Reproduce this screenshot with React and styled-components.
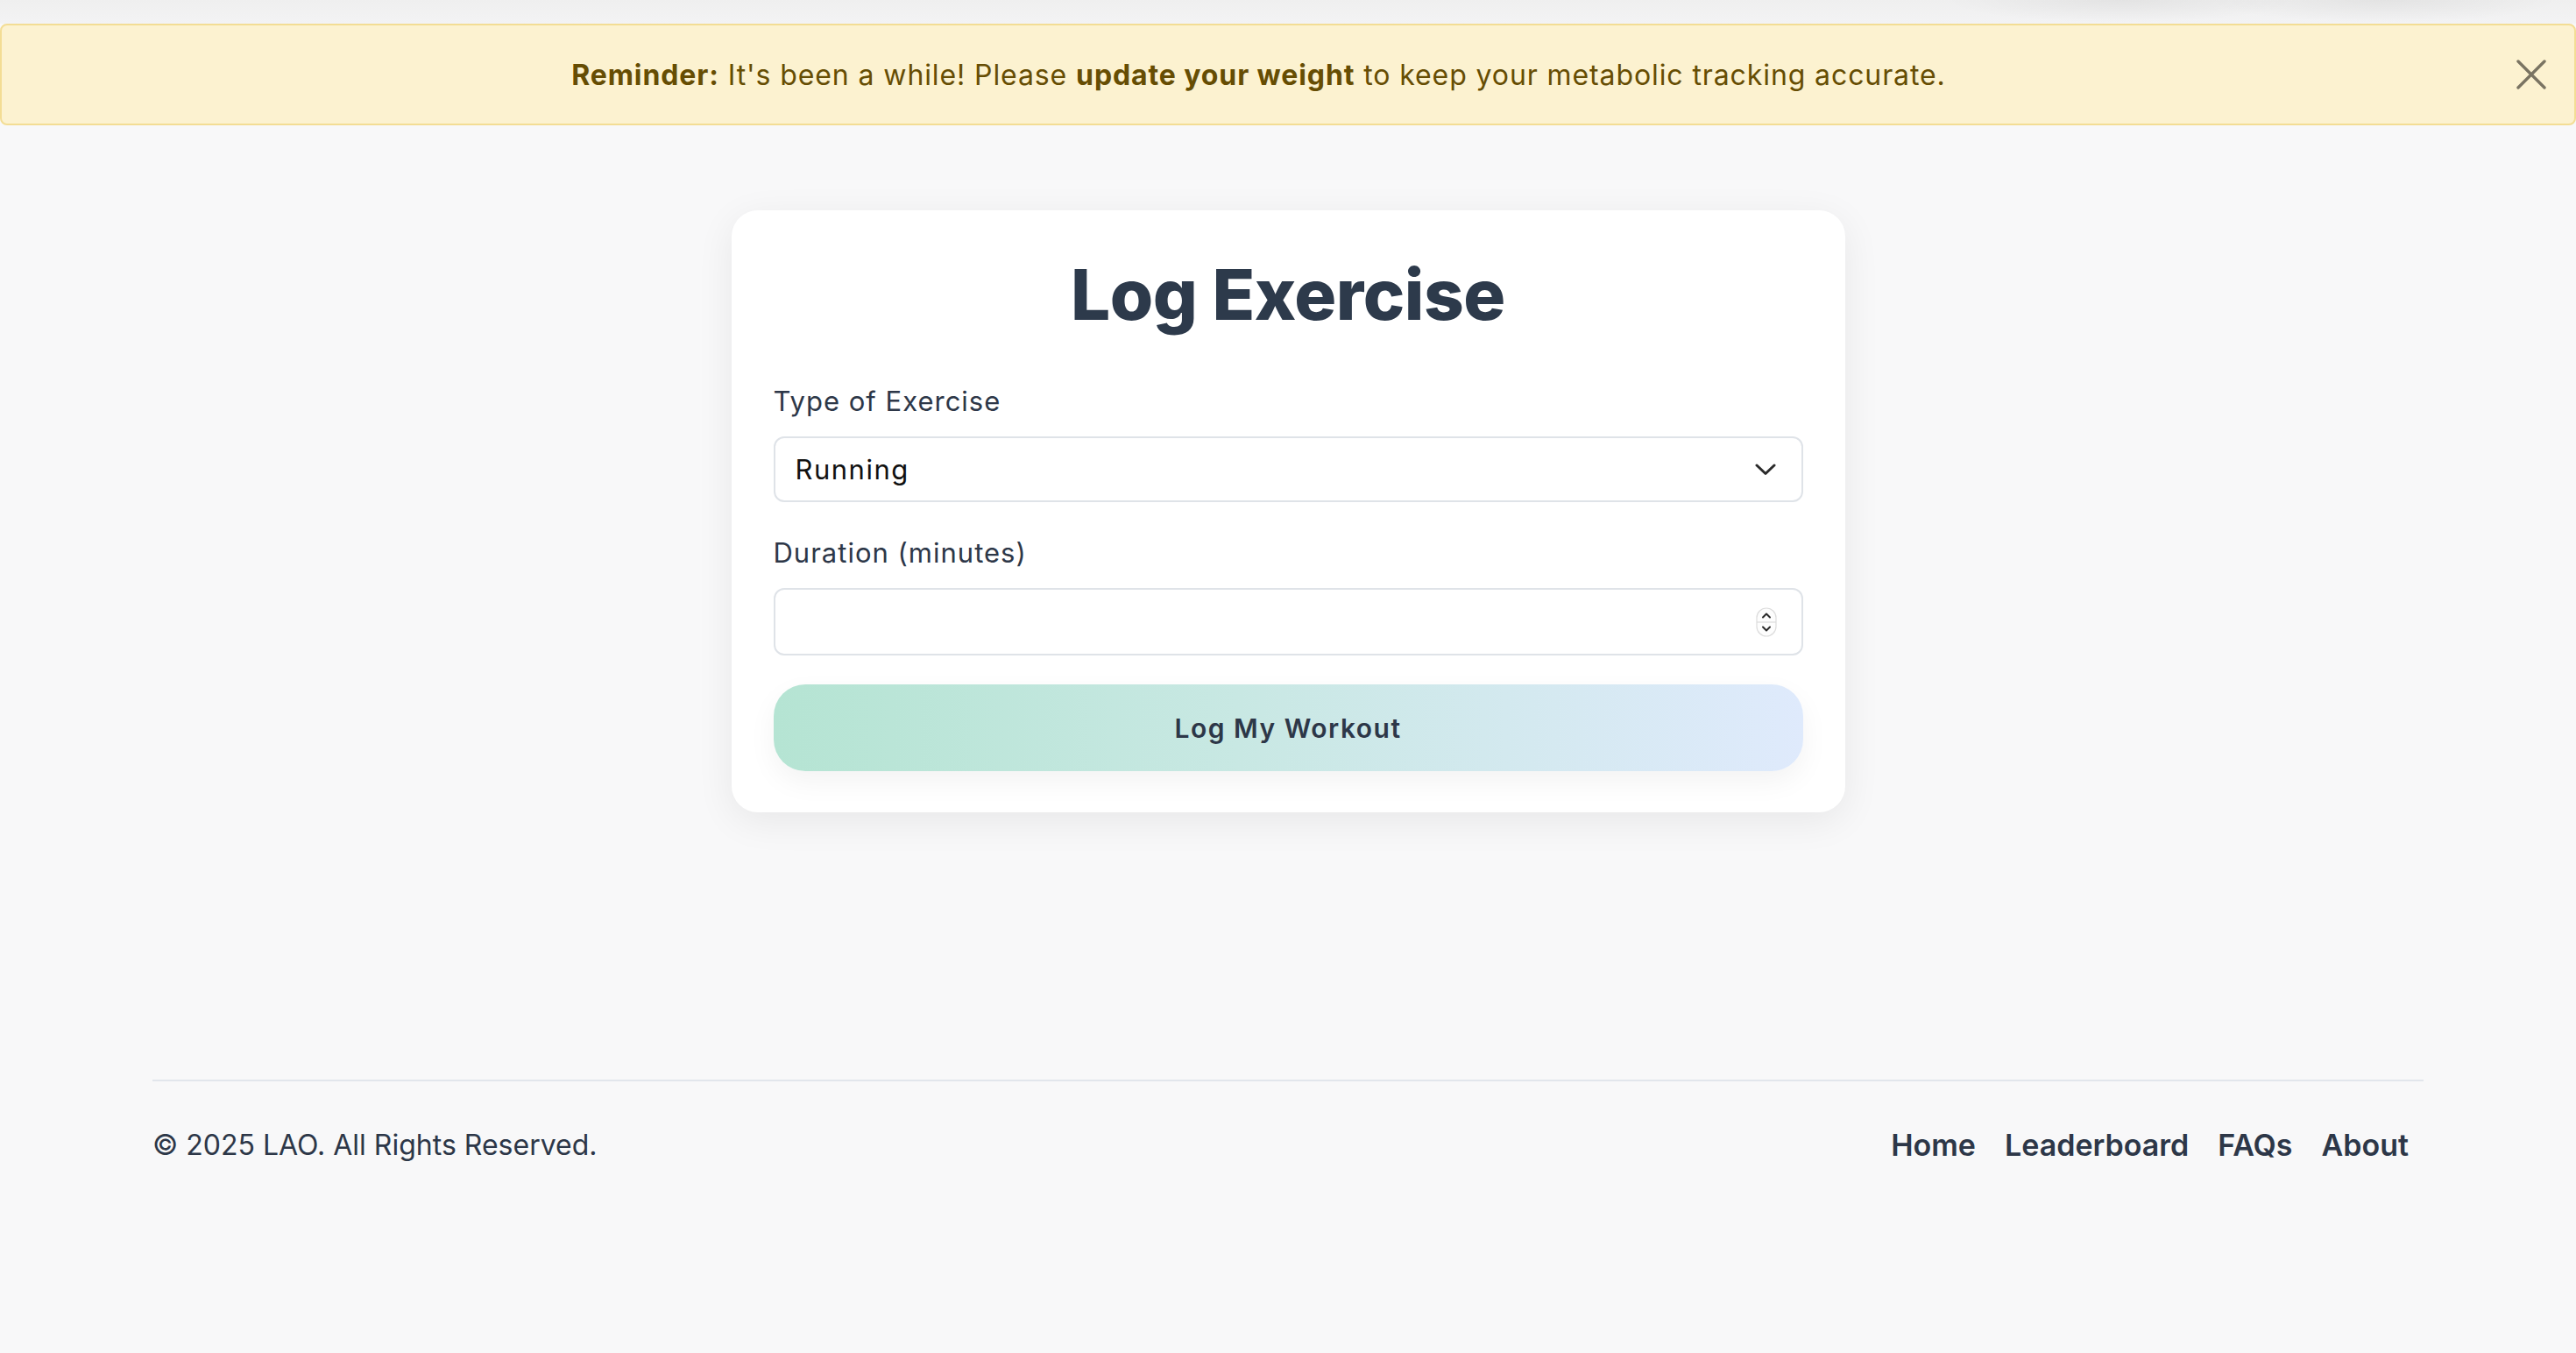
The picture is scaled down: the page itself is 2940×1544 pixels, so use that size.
import React, { useState } from "react";
import styled, { createGlobalStyle } from "styled-components";

const TextColor = "#2d3748";
const FontStack = `"Inter", "Liberation Sans", sans-serif`;

const GlobalStyle = createGlobalStyle`
  * {
    box-sizing: border-box;
  }
  html, body {
    margin: 0;
    padding: 0;
    background: #f8f8f9;
    font-family: ${FontStack};
    color: ${TextColor};
  }
`;

function App() {
  const [showReminder, setShowReminder] = useState(true);
  const [exercise, setExercise] = useState("Running");
  const [duration, setDuration] = useState("");

  return (
    <Page>
      <GlobalStyle />
      <TopShade />
      {showReminder && (
        <Reminder>
          <ReminderText>
            <strong>Reminder:</strong> It's been a while! Please{" "}
            <strong>update your weight</strong> to keep your metabolic tracking
            accurate.
          </ReminderText>
          <CloseButton onClick={() => setShowReminder(false)} aria-label="Close">
            <svg width="34" height="34" viewBox="0 0 34 34">
              <path
                d="M2 2 L32 32 M32 2 L2 32"
                stroke="currentColor"
                strokeWidth="3.4"
                strokeLinecap="round"
              />
            </svg>
          </CloseButton>
        </Reminder>
      )}

      <Main>
        <Card>
          <Title>Log Exercise</Title>
          <Field>
            <Label htmlFor="exercise">Type of Exercise</Label>
            <SelectBox>
              <Select
                id="exercise"
                value={exercise}
                onChange={(e) => setExercise(e.target.value)}
              >
                <option>Running</option>
                <option>Cycling</option>
                <option>Swimming</option>
                <option>Walking</option>
                <option>Weight Training</option>
              </Select>
              <Chevron width="24" height="14" viewBox="0 0 24 14">
                <path
                  d="M2 2 L12 11.5 L22 2"
                  fill="none"
                  stroke="#2b2b2b"
                  strokeWidth="3"
                  strokeLinecap="round"
                  strokeLinejoin="round"
                />
              </Chevron>
            </SelectBox>
          </Field>
          <Field>
            <Label htmlFor="duration">Duration (minutes)</Label>
            <InputBox $tall>
              <NumberInput
                id="duration"
                type="text"
                inputMode="numeric"
                value={duration}
                onChange={(e) => setDuration(e.target.value)}
              />
              <Spinner width="24" height="34" viewBox="0 0 24 34">
                <rect
                  x="1"
                  y="1"
                  width="22"
                  height="32"
                  rx="11"
                  fill="#fdfdfd"
                  stroke="#dcdcdc"
                  strokeWidth="1.2"
                />
                <line x1="1" y1="17" x2="23" y2="17" stroke="#dcdcdc" strokeWidth="1.2" />
                <path
                  d="M8 11.5 L12 7.5 L16 11.5"
                  fill="none"
                  stroke="#2b2b2b"
                  strokeWidth="2"
                  strokeLinecap="round"
                  strokeLinejoin="round"
                />
                <path
                  d="M8 22.5 L12 26.5 L16 22.5"
                  fill="none"
                  stroke="#2b2b2b"
                  strokeWidth="2"
                  strokeLinecap="round"
                  strokeLinejoin="round"
                />
              </Spinner>
            </InputBox>
          </Field>
          <SubmitButton type="button">Log My Workout</SubmitButton>
        </Card>
      </Main>

      <Footer>
        <Copyright>© 2025 LAO. All Rights Reserved.</Copyright>
        <FooterNav>
          <FooterLink href="#">Home</FooterLink>
          <FooterLink href="#">Leaderboard</FooterLink>
          <FooterLink href="#">FAQs</FooterLink>
          <FooterLink href="#">About</FooterLink>
        </FooterNav>
      </Footer>
    </Page>
  );
}

const Page = styled.div`
  min-height: 1544px;
  display: flex;
  flex-direction: column;
`;

const TopShade = styled.div`
  height: 27px;
  background:
    radial-gradient(ellipse 200px 26px at 2420px 0px, rgba(0, 0, 0, 0.05), transparent),
    radial-gradient(ellipse 200px 26px at 2720px 0px, rgba(0, 0, 0, 0.05), transparent),
    linear-gradient(to bottom, #efefef, #f3f3f4);
`;

const Reminder = styled.div`
  height: 116px;
  display: flex;
  align-items: center;
  gap: 33px;
  padding: 0 32px 0 32px;
  background: #fcf2d0;
  border: 2px solid #f3dd94;
  border-radius: 8px;
`;

const ReminderText = styled.p`
  flex: 1;
  margin: 0;
  text-align: center;
  font-size: 32px;
  color: #664d03;
  letter-spacing: 0.9px;

  strong {
    font-weight: 700;
  }
`;

const CloseButton = styled.button`
  display: flex;
  padding: 0;
  border: none;
  background: transparent;
  color: #7a7462;
  cursor: pointer;
`;

const Main = styled.main`
  display: flex;
  justify-content: center;
  padding: 97px 0 305px;
`;

const Card = styled.section`
  width: 1271px;
  padding: 48px 48px 47px;
  background: #ffffff;
  border-radius: 30px;
  box-shadow: 0 10px 44px rgba(0, 0, 0, 0.07);
`;

const Title = styled.h1`
  margin: 0 0 51px;
  text-align: center;
  font-size: 80px;
  line-height: 96px;
  font-weight: 800;
  letter-spacing: -0.5px;
  color: #2d3a4b;
`;

const Field = styled.div`
  display: flex;
  flex-direction: column;
  gap: 18px;
  margin-bottom: 35px;

  & + button {
    margin-top: -2px;
  }
`;

const Label = styled.label`
  font-size: 31px;
  line-height: 45px;
  letter-spacing: 1px;
  color: ${TextColor};
`;

const SelectBox = styled.div`
  position: relative;
  display: flex;
  align-items: center;
  height: ${(props) => (props.$tall ? "77px" : "75px")};
  border: 2px solid #dfe3e8;
  border-radius: 12px;
  background: #ffffff;
`;

const InputBox = styled(SelectBox)`
  padding-right: 28px;
`;

const Select = styled.select`
  appearance: none;
  width: 100%;
  height: 100%;
  padding: 0 60px 0 23px;
  border: none;
  background: transparent;
  font-family: ${FontStack};
  font-size: 31px;
  letter-spacing: 1.5px;
  color: #111111;
  outline: none;
`;

const Chevron = styled.svg`
  position: absolute;
  right: 29px;
  top: 50%;
  transform: translateY(-50%);
  pointer-events: none;
`;

const NumberInput = styled.input`
  flex: 1;
  height: 100%;
  padding: 0 23px;
  border: none;
  background: transparent;
  font-family: ${FontStack};
  font-size: 31px;
  outline: none;
`;

const Spinner = styled.svg`
  flex-shrink: 0;
`;

const SubmitButton = styled.button`
  display: block;
  width: 100%;
  height: 99px;
  border: none;
  border-radius: 36px;
  background: linear-gradient(90deg, #b5e4d3 0%, #c8e8e3 45%, #dfeafc 100%);
  box-shadow: 0 12px 32px rgba(0, 0, 0, 0.05);
  font-family: ${FontStack};
  font-size: 30px;
  font-weight: 600;
  letter-spacing: 1.5px;
  color: ${TextColor};
  cursor: pointer;
`;

const Footer = styled.footer`
  width: 2592px;
  margin: 0 auto;
  padding-top: 47px;
  border-top: 2px solid #e2e6ec;
  display: flex;
  justify-content: space-between;
  align-items: flex-start;
`;

const Copyright = styled.p`
  margin: 0;
  font-size: 32px;
  line-height: 51px;
  color: ${TextColor};
`;

const FooterNav = styled.nav`
  display: flex;
  gap: 33px;
  padding-right: 17px;
`;

const FooterLink = styled.a`
  font-size: 34px;
  line-height: 51px;
  font-weight: 600;
  color: ${TextColor};
  text-decoration: none;
`;

export default App;
